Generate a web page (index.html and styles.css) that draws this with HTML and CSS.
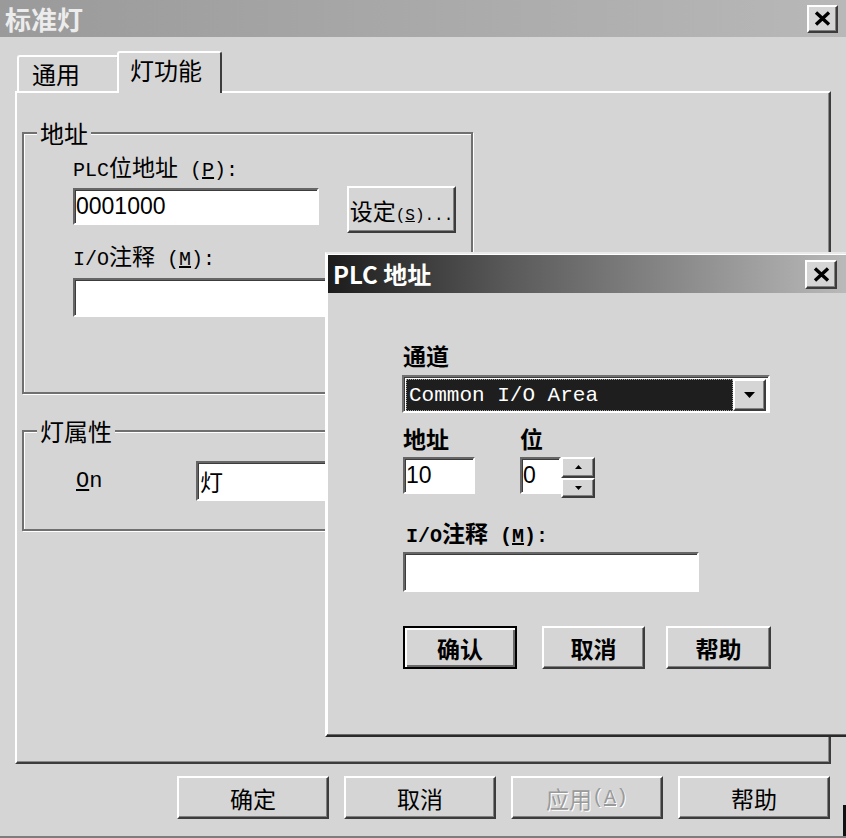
FILE: index.html
```html
<!DOCTYPE html>
<html lang="zh-CN">
<head>
<meta charset="utf-8">
<title>标准灯</title>
<link rel="stylesheet" href="styles.css">
</head>
<body>
<div class="win">
  <div class="titlebar">
    <span class="title">标准灯</span>
    <span class="closebtn"><svg width="17" height="15" viewBox="0 0 17 15"><path d="M2 1.5 L15 13.5 M15 1.5 L2 13.5" stroke="#000" stroke-width="3.4" fill="none"/></svg></span>
  </div>
  <div class="tabs">
    <div class="tab">通用</div>
    <div class="tab active">灯功能</div>
  </div>
  <div class="panel">
    <fieldset class="group addr">
      <legend>地址</legend>
      <div class="addr-body">
        <div class="lbl"><span class="m">PLC</span>位地址<span class="m"> (<u>P</u>):</span></div>
        <div class="row">
          <div class="edit e-plc"><span class="num">0001000</span></div>
          <div class="btn btn-set"><span class="set-text">设定<span class="m sm">(<u>S</u>)...</span></span></div>
        </div>
        <div class="lbl lbl2"><span class="m">I/O</span>注释<span class="m"> (<u>M</u>):</span></div>
        <div class="edit e-note"></div>
      </div>
    </fieldset>
    <fieldset class="group lamp">
      <legend>灯属性</legend>
      <div class="lamp-body">
        <span class="on m"><u>O</u>n</span>
        <div class="edit e-lamp">灯</div>
      </div>
    </fieldset>
  </div>
  <div class="buttons">
    <div class="btn pb">确定</div>
    <div class="btn pb">取消</div>
    <div class="btn pb disabled">应用<span class="m">(<u>A</u>)</span></div>
    <div class="btn pb">帮助</div>
  </div>
  <div class="grip"></div>

  <div class="dialog">
    <div class="dtitle">
      <span class="dtitle-text">PLC 地址</span>
      <span class="closebtn dclose"><svg width="17" height="15" viewBox="0 0 17 15"><path d="M2 1.5 L15 13.5 M15 1.5 L2 13.5" stroke="#000" stroke-width="3.4" fill="none"/></svg></span>
    </div>
    <div class="dbody">
      <div class="dlbl first">通道</div>
      <div class="combo">
        <div class="combo-val">Common I/O Area</div>
        <div class="combo-btn"><svg width="11" height="6" viewBox="0 0 11 6"><path d="M0 0 H11 L5.5 6 Z" fill="#000"/></svg></div>
      </div>
      <div class="addr-row">
        <div class="f-addr">
          <div class="dlbl">地址</div>
          <div class="edit e-addr"><span class="num">10</span></div>
        </div>
        <div class="f-bit">
          <div class="dlbl">位</div>
          <div class="spin-wrap">
            <div class="edit e-bit"><span class="num">0</span></div>
            <div class="spin">
              <div class="spin-btn"><svg width="7" height="4" viewBox="0 0 7 4"><path d="M0 4 H7 L3.5 0 Z" fill="#000"/></svg></div>
              <div class="spin-btn"><svg width="7" height="4" viewBox="0 0 7 4"><path d="M0 0 H7 L3.5 4 Z" fill="#000"/></svg></div>
            </div>
          </div>
        </div>
      </div>
      <div class="dlbl note-lbl"><span class="m">I/O</span>注释<span class="m"> (<u>M</u>):</span></div>
      <div class="edit e-dnote"></div>
      <div class="dbuttons">
        <div class="btn default b-ok">确认</div>
        <div class="btn b-cancel">取消</div>
        <div class="btn b-help">帮助</div>
      </div>
    </div>
  </div>
</div>
</body>
</html>
```
FILE: styles.css
```css
* { box-sizing: border-box; }
html, body { margin: 0; padding: 0; }
body {
  background: #d5d5d5;
  font-family: "Noto Sans CJK SC", "Liberation Sans", sans-serif;
  font-size: 23px;
  color: #000;
}
.m { font-family: "Liberation Mono", "Noto Sans CJK SC", monospace; font-size: 20px; }
.num { font-family: "Liberation Sans", sans-serif; font-size: 23px; }

.win {
  position: relative;
  width: 846px;
  height: 838px;
  overflow: hidden;
  background: #d5d5d5;
  border-bottom: 2px solid #7d7d7d;
}

/* title bar */
.titlebar {
  height: 37px;
  display: flex;
  align-items: center;
  padding: 0 8px 0 5px;
  background: linear-gradient(to right, #9a9a9a, #b8b8b8);
}
.title { color: #ececec; font-weight: 700; font-size: 26px; line-height: 30px; }
.closebtn {
  margin-left: auto;
  width: 31px;
  height: 28px;
  display: flex;
  align-items: center;
  justify-content: center;
  background: #d5d5d5;
  border: 2px solid;
  border-color: #fff #3c3c3c #3c3c3c #fff;
  box-shadow: inset -1px -1px #808080;
}

/* tabs */
.tabs {
  display: flex;
  align-items: flex-end;
  height: 40px;
  margin-top: 14px;
  padding-left: 17px;
}
.tab {
  position: relative;
  width: 102px;
  height: 36px;
  padding: 3px 0 0 13px;
  line-height: 28px;
  background: #d5d5d5;
  border-top: 2px solid #fff;
  border-left: 2px solid #fff;
  border-right: 2px solid #3c3c3c;
  border-radius: 3px 3px 0 0;
  font-size: 24px;
}
.tab.active {
  z-index: 2;
  width: 105px;
  height: 42px;
  margin-left: -2px;
  margin-bottom: -2px;
  padding: 3px 0 0 11px;
}

/* panel */
.panel {
  position: relative;
  z-index: 1;
  width: 816px;
  height: 673px;
  margin-left: 15px;
  padding: 26px 0 0 5px;
  border: 2px solid;
  border-color: #fff #3c3c3c #3c3c3c #fff;
  box-shadow: inset -1px -1px #8a8a8a;
}

.group {
  margin: 0;
  padding: 0;
  width: 451px;
  min-inline-size: 0;
  border: 2px solid #707070;
  box-shadow: inset 1px 1px #fff, 1px 1px #fff;
}
.group legend {
  margin-left: 13px;
  padding: 0 3px;
  line-height: 28px;
  font-size: 24px;
  background: #d5d5d5;
}
.lbl { line-height: 26px; }
.addr-body { padding: 6px 0 75px 49px; }
.row { display: flex; align-items: flex-start; margin-top: 2px; }
.lbl2 { margin-top: 9px; }

.edit {
  display: flex;
  align-items: center;
  background: #fff;
  border: 2px solid;
  border-color: #666 #fff #fff #666;
  box-shadow: inset 1px 1px #3c3c3c;
  padding-left: 1px;
  overflow: hidden;
  white-space: nowrap;
}
.e-plc { width: 246px; height: 37px; margin-top: 2px; }
.e-note { width: 390px; height: 39px; margin-top: 5px; }

.btn {
  display: flex;
  align-items: center;
  justify-content: center;
  background: #d5d5d5;
  border: 2px solid;
  border-color: #fff #3c3c3c #3c3c3c #fff;
  box-shadow: inset -1px -1px #808080;
  white-space: nowrap;
  overflow: hidden;
}
.btn-set { width: 109px; height: 47px; margin-left: 28px; }
.set-text { flex: none; }
.sm { font-size: 16px; }

.lamp { margin-top: 23px; }
.lamp-body {
  display: flex;
  align-items: center;
  padding: 16px 0 28px 52px;
}
.on { width: 120px; font-size: 22px; }
.e-lamp { width: 260px; height: 40px; padding-left: 2px; }

/* bottom buttons */
.buttons {
  display: flex;
  justify-content: flex-end;
  gap: 15px;
  padding-right: 16px;
  margin-top: 12px;
}
.pb { width: 152px; height: 43px; }
.disabled { color: #9a9a9a; text-shadow: 1px 1px #fff; }

.grip {
  position: absolute;
  right: 0;
  top: 805px;
  width: 3px;
  height: 33px;
  background: #111;
}

/* PLC address dialog */
.dialog {
  position: absolute;
  left: 325px;
  top: 252px;
  z-index: 5;
  width: 524px;
  height: 485px;
  padding: 1px;
  background: #d5d5d5;
  border: 2px solid;
  border-color: #eaeaea #2a2a2a #2a2a2a #fff;
  box-shadow: inset -1px -1px #6a6a6a, inset 1px 1px #fff;
}
.dtitle {
  height: 38px;
  display: flex;
  align-items: center;
  padding: 0 9px 0 5px;
  background: linear-gradient(to right, #1c1c1c, #5a5a5a 35%, #b9b9b9);
}
.dtitle-text { color: #fff; font-weight: 700; font-size: 24px; line-height: 28px; }
.dclose { width: 32px; height: 29px; }

.dbody { padding-left: 75px; font-weight: 700; }
.dbody .m { font-weight: 700; }
.dlbl { line-height: 26px; }
.dlbl.first { margin-top: 49px; }
.combo {
  display: flex;
  width: 368px;
  height: 38px;
  margin: 7px 0 0 -1px;
  padding: 2px 2px 0 2px;
  border: 2px solid;
  border-color: #707070 #fff #fff #707070;
  box-shadow: inset 1px 1px #3c3c3c;
  background: #fff;
}
.combo-val {
  flex: 1;
  display: flex;
  align-items: center;
  padding-left: 2px;
  background: #1e1e1e;
  color: #fff;
  border: 1px dotted #a0a0a0;
  font-family: "Liberation Mono", monospace;
  font-size: 21px;
  font-weight: 400;
  white-space: pre;
}
.combo-btn {
  width: 33px;
  display: flex;
  align-items: center;
  justify-content: center;
  background: #d5d5d5;
  border: 2px solid;
  border-color: #fff #3c3c3c #3c3c3c #fff;
  box-shadow: inset -1px -1px #808080;
}
.addr-row { display: flex; margin-top: 12px; }
.f-addr { width: 117px; }
.e-addr { width: 72px; height: 37px; margin-top: 6px; font-weight: 400; }
.spin-wrap { display: flex; margin-top: 6px; align-items: flex-start; }
.e-bit { width: 41px; height: 37px; font-weight: 400; }
.spin { display: flex; flex-direction: column; width: 34px; height: 41px; }
.spin-btn {
  flex: 1;
  display: flex;
  align-items: center;
  justify-content: center;
  background: #d5d5d5;
  border: 2px solid;
  border-color: #fff #3c3c3c #3c3c3c #fff;
  box-shadow: inset -1px -1px #808080;
}
.note-lbl { margin-top: 21px; padding-left: 3px; }
.e-dnote { width: 296px; height: 40px; margin-top: 2px; }
.dbuttons { display: flex; margin-top: 34px; }
.dbuttons .btn { height: 43px; }
.b-ok { width: 114px; }
.b-cancel { width: 103px; margin-left: 25px; }
.b-help { width: 105px; margin-left: 21px; }
.default {
  border: 2px solid #000;
  box-shadow: inset 2px 2px #fff, inset -2px -2px #6a6a6a;
}
```
